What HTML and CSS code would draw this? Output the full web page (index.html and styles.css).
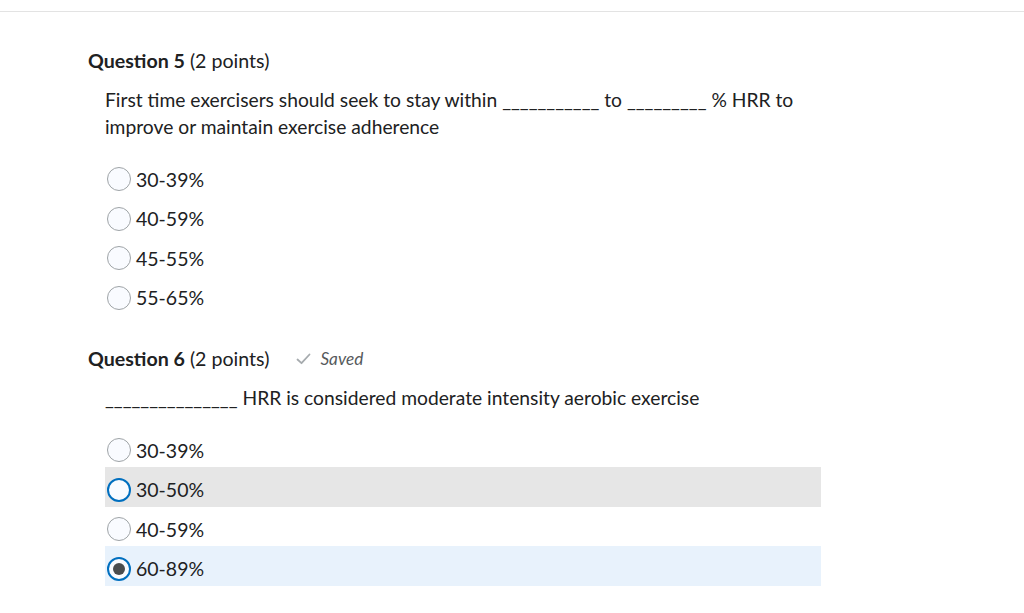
FILE: index.html
```html
<!DOCTYPE html>
<html>
<head>
<meta charset="utf-8">
<link rel="stylesheet" href="styles.css">
</head>
<body>
<div class="topbar"></div>
<main class="content">
  <section class="question q5">
    <h2 class="q-title"><span><b>Question 5</b> (2 points)</span></h2>
    <div class="q-body">
      <p class="q-text">First time exercisers should seek to stay within ___________ to _________ % HRR to improve or maintain exercise adherence</p>
      <ul class="options">
        <li class="option"><span class="radio"></span><span class="label">30-39%</span></li>
        <li class="option"><span class="radio"></span><span class="label">40-59%</span></li>
        <li class="option"><span class="radio"></span><span class="label">45-55%</span></li>
        <li class="option"><span class="radio"></span><span class="label">55-65%</span></li>
      </ul>
    </div>
  </section>
  <section class="question q6">
    <h2 class="q-title"><span><b>Question 6</b> (2 points)</span><span class="saved"><svg class="check" width="15" height="12" viewBox="0 0 15 12"><path d="M1.5 6.5 L5.5 10.2 L13.5 1.5" fill="none" stroke="#a6abae" stroke-width="1.8" stroke-linecap="round" stroke-linejoin="round"/></svg><i>Saved</i></span></h2>
    <div class="q-body">
      <p class="q-text">_______________ HRR is considered moderate intensity aerobic exercise</p>
      <ul class="options">
        <li class="option"><span class="radio"></span><span class="label">30-39%</span></li>
        <li class="option hover"><span class="radio focus"></span><span class="label">30-50%</span></li>
        <li class="option"><span class="radio"></span><span class="label">40-59%</span></li>
        <li class="option selected"><span class="radio checked"></span><span class="label">60-89%</span></li>
      </ul>
    </div>
  </section>
</main>
</body>
</html>
```

FILE: styles.css
```css
html, body {
  margin: 0;
  padding: 0;
  background: #ffffff;
}
body {
  font-family: Lato, "Noto Sans", sans-serif;
  color: #202122;
}
.topbar {
  height: 11px;
  border-bottom: 1px solid #e3e3e3;
}
.content {
  padding-left: 88px;
  width: 733px;
}
.question {
  display: flex;
  flex-direction: column;
}
.q5 {
  margin-top: 34.5px;
}
.q6 {
  margin-top: 30px;
}
.q-title {
  margin: 0;
  font-size: 19.6px;
  line-height: 28px;
  font-weight: 400;
  display: flex;
  align-items: center;
}
.q-title b {
  font-weight: 700;
}
.saved {
  display: inline-flex;
  align-items: center;
  margin-left: 27px;
  font-size: 17.2px;
  color: #565a5c;
}
.check {
  margin-right: 9px;
}
.q-body {
  padding-left: 17px;
}
.q-text {
  margin: 11.5px 0 0 0;
  font-size: 19.25px;
  line-height: 27px;
  width: 700px;
}
.options {
  list-style: none;
  margin: 16.5px 0 0 0;
  padding: 0;
  display: flex;
  flex-direction: column;
}
.option {
  box-sizing: border-box;
  height: 39.5px;
  padding: 6px 0 0 2px;
  display: flex;
  align-items: center;
  gap: 5px;
  font-size: 19.5px;
}
.option.hover {
  background: #e6e6e6;
}
.option.selected {
  background: #e8f2fc;
}
.radio {
  box-sizing: border-box;
  width: 24px;
  height: 24px;
  border-radius: 50%;
  border: 1px solid #9ea3a6;
  background: #f9fbff;
  display: flex;
  align-items: center;
  justify-content: center;
  flex: none;
}
.radio.focus,
.radio.checked {
  border: 2px solid #006fbf;
}
.radio.checked::after {
  content: "";
  width: 12px;
  height: 12px;
  border-radius: 50%;
  background: #494c4e;
}
```
